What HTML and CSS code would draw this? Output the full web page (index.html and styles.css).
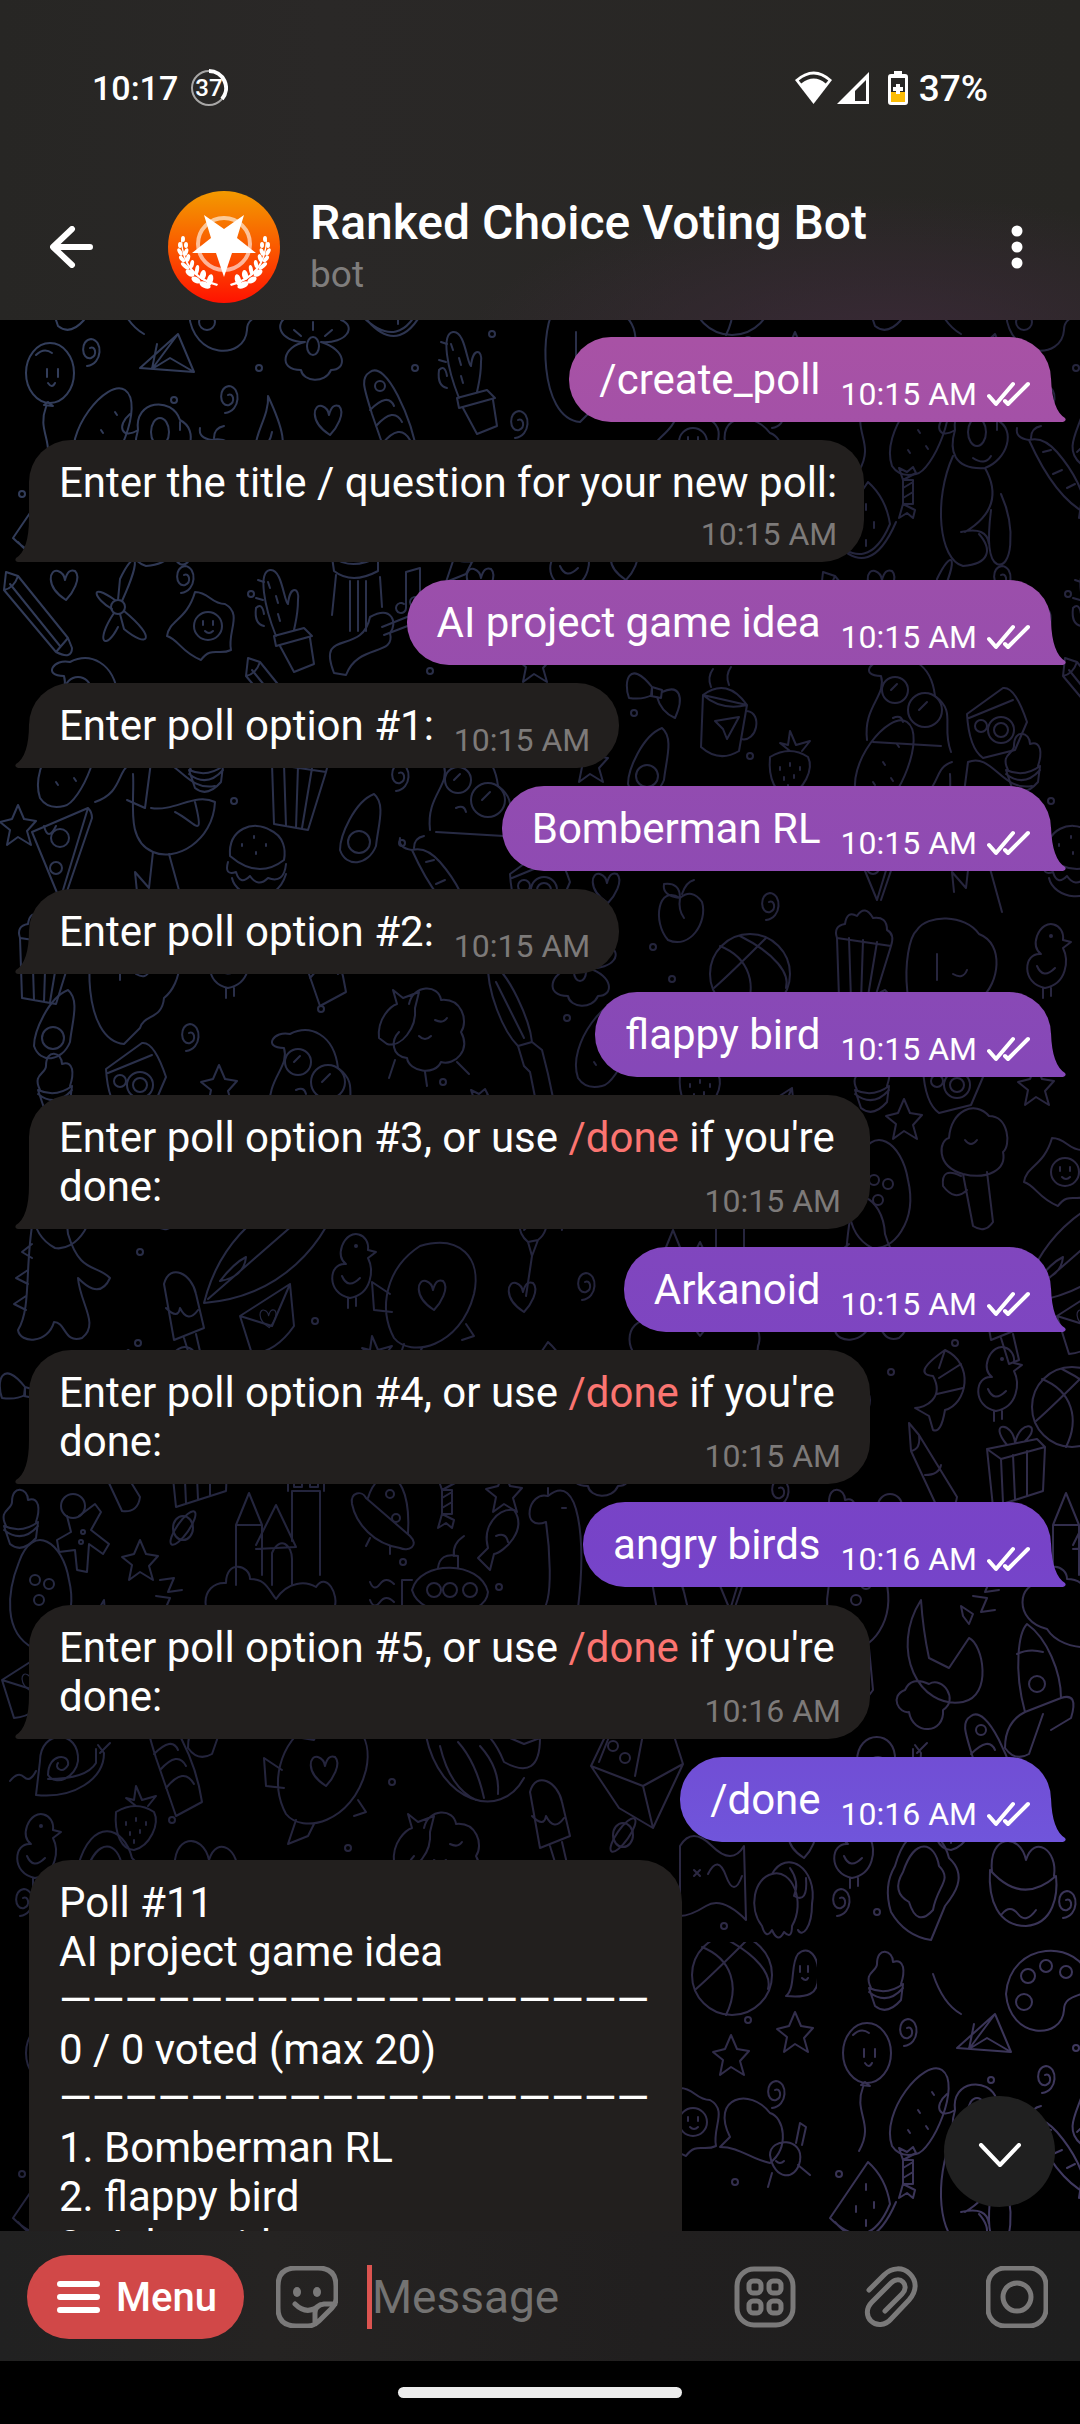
FILE: index.html
```html
<!DOCTYPE html>
<html lang="en">
<head>
<meta charset="utf-8">
<meta name="viewport" content="width=device-width, initial-scale=1">
<title>Ranked Choice Voting Bot</title>
<link rel="stylesheet" href="styles.css">
</head>
<body>
<svg class="sprite" aria-hidden="true">
  <symbol id="ticks" viewBox="0 0 44 26"><path d="M2 15l7 8L26 3M18 20l3 3L41 3" fill="none" stroke="#fff" stroke-width="4" stroke-linecap="round" stroke-linejoin="round"/></symbol>
</svg>

<header class="top">
  <div class="status">
    <span class="clock">10:17</span>
    <svg class="ring" viewBox="0 0 38 38" aria-hidden="true">
      <circle cx="19" cy="19" r="17" fill="none" stroke="#a8a7a6" stroke-width="2"/>
      <path d="M19 2a17 17 0 0 1 13 28" fill="none" stroke="#fff" stroke-width="4"/>
      <text x="19" y="27" text-anchor="middle" class="ring-text">37</text>
    </svg>
    <span class="spacer"></span>
    <svg class="signals" viewBox="0 0 76 36" aria-hidden="true">
      <path d="M1 10Q20-7 38 10L19.500 34Z" fill="#fff"/>
      <path d="M6 12Q20 1 33 12" fill="none" stroke="#272624" stroke-width="4"/>
      <path d="M75 2V34H43Z" fill="#fff"/>
      <path d="M72 10V31H61V21Z" fill="#272624"/>
    </svg>
    <svg class="battery" viewBox="0 0 20 34" aria-hidden="true">
      <path d="M6 0h8v3h3a3 3 0 0 1 3 3v25a3 3 0 0 1-3 3H3a3 3 0 0 1-3-3V6a3 3 0 0 1 3-3h3z" fill="#fff"/>
      <path d="M3 7h14v14H3z" fill="#272624"/><path d="M3 21h14v10H3z" fill="#fbbc05"/>
      <path d="M10 13v10M5 18h10" stroke="#fff" stroke-width="4"/>
    </svg>
    <span class="percent">37%</span>
  </div>
  <div class="title-row">
    <button class="icon-button back" aria-label="Back">
      <svg viewBox="0 0 44 42"><path d="M22 3L3 21l19 18M4 21h36" fill="none" stroke="#fff" stroke-width="6" stroke-linecap="round" stroke-linejoin="round"/></svg>
    </button>
    <svg class="avatar" viewBox="0 0 112 112" aria-hidden="true">
      <defs>
        <linearGradient id="sun" x1="0" y1="0" x2="0" y2="1"><stop offset="0" stop-color="#f39a00"/><stop offset=".5" stop-color="#fa5a00"/><stop offset="1" stop-color="#ff1200"/></linearGradient>
        <g id="laurel" fill="#fff">
          <ellipse cx="15" cy="48" rx="2" ry="3"/><ellipse cx="12" cy="54" rx="2" ry="3"/><ellipse cx="18" cy="54" rx="2" ry="3"/>
          <ellipse cx="12" cy="61" rx="2" ry="4" transform="rotate(-30 12 61)"/><ellipse cx="18" cy="61" rx="2" ry="4" transform="rotate(20 18 61)"/>
          <ellipse cx="14" cy="68" rx="2" ry="4" transform="rotate(-40 14 68)"/><ellipse cx="20" cy="67" rx="2" ry="4" transform="rotate(15 20 67)"/>
          <ellipse cx="17" cy="75" rx="2" ry="5" transform="rotate(-50 17 75)"/><ellipse cx="24" cy="73" rx="2" ry="4" transform="rotate(10 24 73)"/>
          <ellipse cx="22" cy="82" rx="3" ry="5" transform="rotate(-55 22 82)"/><ellipse cx="29" cy="79" rx="2" ry="5" transform="rotate(10 29 79)"/>
          <ellipse cx="28" cy="89" rx="3" ry="5" transform="rotate(-60 28 89)"/><ellipse cx="35" cy="84" rx="3" ry="5" transform="rotate(10 35 84)"/>
          <ellipse cx="37" cy="94" rx="3" ry="6" transform="rotate(-65 37 94)"/><ellipse cx="42" cy="89" rx="3" ry="6" transform="rotate(15 42 89)"/>
          <path d="M14 49Q16 84 50 93l-1 2Q14 86 13 49z"/>
        </g>
      </defs>
      <circle cx="56" cy="56" r="56" fill="url(#sun)"/>
      <circle cx="56" cy="53" r="26" fill="none" stroke="#fff" stroke-opacity=".6" stroke-width="4"/>
      <path d="M56 86L48 62H24L43 47 36 24 56 38 76 24 69 47 88 62H64Z" fill="#fff"/>
      <use href="#laurel"/><use href="#laurel" transform="translate(112 0) scale(-1 1)"/>
    </svg>
    <div class="peer">
      <h1 class="peer-name">Ranked Choice Voting Bot</h1>
      <p class="peer-kind">bot</p>
    </div>
    <button class="icon-button more" aria-label="More options">
      <svg viewBox="0 0 44 44"><g fill="#fff"><circle cx="22" cy="6" r="5.500"/><circle cx="22" cy="22" r="5.500"/><circle cx="22" cy="38" r="5.500"/></g></svg>
    </button>
  </div>
</header>

<main class="chat">
  <svg class="wallpaper" aria-hidden="true">
    <defs>
      <linearGradient id="tint" x1="0" y1="0" x2="1" y2="1">
        <stop offset="0" stop-color="#34405e"/><stop offset=".45" stop-color="#23243c"/><stop offset=".7" stop-color="#29263f"/><stop offset="1" stop-color="#423b63"/>
      </linearGradient>
      <g id="spiral"><path d="M-4 14C12 12 12-12 0-13C-11-12-10 8 0 6C7 3 4-7-1-4"/></g>
      <g id="heart"><path d="M2 16C-20 2-14-16-6-13Q0-11 1-4Q4-16 11-13C18-6 8 10 2 16Z"/></g>
      <g id="star"><path d="M0-20L6-6 18-4 9 6 13 20 0 12-11 20-8 5-18-3-6-6Z"/></g>
      <g id="dot"><circle r="3"/></g>
      <g id="balloon"><ellipse rx="24" ry="30"/><path d="M-14-18Q-6-26 2-20M-3-4v8M8-4v8M-2 10Q2 16 5 10M-6 32l4-3 5 4zM-4 34C-14 60 8 70-8 98"/></g>
      <g id="plane"><path d="M18-28L-20 6 34 10ZM18-28L-8 7-3-18M-8 7L10-4 34 10M-16-28Q-34-38-44-68"/></g>
      <g id="flower"><path d="M-8-4C-34-4-40-24-24-30C-22-48 0-46 2-36C10-48 34-42 28-26C44-20 34-2 8-4C34 4 34 24 18 24C12 38-10 36-12 24C-36 24-30 0-8-4Z"/><ellipse rx="6" ry="9"/><path d="M0-16v-8M-12-10l-7-6M12-10l7-6"/></g>
      <g id="cactus"><path d="M-4 24C-16-6-22-40-10-42C2-44 4-10 8-8C10-28 20-24 18-12C18 2 16 8 14 18M-6 24L24 16 32 24-4 34ZM0 34l14 26 20-8-4-26M-16 14q-10-2-8-18 6-6 8 6"/><path d="M-12-30l2 6M-4-16l2 7M-2 2l2 7M-22-32l6 2M-24-14l7 2"/></g>
      <g id="pickle"><path d="M-28 36C-40 2 4-52 22-40C42-26 12 42-4 44Q-20 48-28 36Z"/><path d="M-12 20l2 3M-2 0l2 3M12-18l2 3M6 16l2 3"/></g>
      <g id="cone"><path d="M-22-46C-32-40-28-30-20-4L0 54 26 40C20 0-6-58-22-46ZM-22-8Q-4-26 2-12M-16 8Q2-12 10 4M-10 26Q8 4 18 22"/><circle cx="-12" cy="-32" r="5"/></g>
      <g id="brush"><path d="M-2 30C-24 12 4-12 2-38C16-8 24 16 8 28ZM-2 30l4 14 6-16M2 44l-6 40M-6 18q10-8 12-20"/></g>
      <g id="dog"><path d="M-20-30C-24-60 14-64 22-40C42-30 32 0 10 8C-22 10-26-10-20-30C-36-20-42-34-28-46M-22-4C-42 40-36 100-12 106C14 104 18 90 4 74M10 8C28 40 10 60-10 72M-14 72Q12 66 14 84M26 34C42 70 36 110 22 104Q10 98 16 50"/><ellipse cx="2" cy="-28" rx="9" ry="14"/><path d="M-2-2q12 8 18-2M22-38v8"/></g>
      <g id="candy"><path d="M-5-10h10v24H-5zM-5-10l-4-12 8 4 6-5 3 6zM-5 14l-4 14 8-5 6 5 2-8zM-5-2l10-6M-5 8l10-6"/></g>
      <g id="melon"><path d="M8-40L-30 16Q8 54 30 2Q26-24 8-40ZM-25 20Q10 60 36 0"/><path d="M6-18v6M14 0v6M-4 4v6M6 18v6"/></g>
      <g id="pencil"><path d="M-32-44L-20-40 30 22 18 36-34-26ZM-34-26Q-24-28-20-40M-28-32L22 30M18 36q16 8 16-4l-4-10"/></g>
      <g id="egg"><path d="M-10-34C4-34 6-22 20-22C38-12 22 6 26 24C14 30 6 20-4 34C-24 26-26 14-38 10C-36-6-18-6-10-34Z"/><circle cx="3" r="14"/><path d="M-2-5v4M8-5v4M0 5q4 4 8 0"/></g>
      <g id="fan"><circle r="7"/><path d="M-3-7C-30-26-24-8-6 2M4-6C26-54 16-58 2-28L0-7M6 4C40 32 30 42 6 22L2 7M-4 6C-24 36-12 44 0 20"/></g>
      <g id="guitar"><path d="M-30-50q20 14 46 0v14q-26 14-44 0zM-26-32l-4 40M18-30l2 30M-12-26v50M-4-26v50M4-26v50M-28 66C-46 20 0 50 8 10C30-2 36 16 28 26C34 50-4 36-16 68ZM20 20l40-16M22 28l42-16"/></g>
      <g id="note"><path d="M-6 20V-16L8-20V14M-6 20a5 5 0 1 1-2-4M8 14a5 5 0 1 1-2-4"/></g>
      <g id="mug"><path d="M-22-22L-24 30Q-6 46 14 34L22-12ZM-22-22Q2-40 22-12Q-4-6-22-22M22-6C38-4 32 26 16 22M-14-30q-4-10 2-18M4-32q-4-10 2-18M-10 4L14 0 2 22-2 12Z"/></g>
      <g id="berry"><path d="M-20-8C-22 14-14 30-2 30C14 26 24 4 18-8Q0-20-20-8ZM0-14l-10-8 8 2 2-14 6 14 14-4-8 10"/><path d="M-10 2v3M0-2v3M10 2v3M-6 12v3M4 10v3M-2 20v3"/></g>
      <g id="bow"><path d="M-5-5C-28-34-34-10-28 6Q-14 8-5 3ZM5 0C22-8 28 4 18 26Q4 20 0 5M-5-5L5-2 4 6-6 4Z"/></g>
      <g id="bird"><path d="M-20-90C-40-84-30-60-60-50M-28-52L-10-44-4-90C20-100 30-60 60-66M-4-44C20-40 40-60 60-50C58-10 20 10-2 0C-30-12-20-50-22-78M-2 0L-6 36-20 20-18 40M14 2L30 60M20-40C40-30 50-10 40-50"/></g>
      <g id="pizza"><path d="M28-44L-28-20 0 48ZM28-44q4 4 4 10L4 48"/><circle cy="-14" r="9"/><circle cx="-4" cy="16" r="6"/><path d="M-16-26q4 16 12 0"/></g>
      <g id="burger"><path d="M-26-8C-28-36-2-44 14-34C28-28 30-14 28-4Q2 16-26-8ZM-28-2q-4 14 8 10 4 14 14 4 8 12 18 2 16 6 18-14M-24 14C-20 34 20 44 30 10"/><path d="M-14-20v2M-2-28v2M10-20v2M0-12v2"/></g>
      <g id="avocado"><path d="M14-36C-6-28-20 6-20 20C-14 38 8 36 16 16C18-4 26-26 14-36Z"/><circle cx="-1" cy="12" r="11"/></g>
      <g id="carrot"><path d="M-28-32Q-14-36 0-20Q26 10 30 42Q-2 26-28-32ZM-14-20l8-2M-4 2l9-4M10 16l8-4M-28-32q-14-2-12-12M-26-34q0-10 10-12"/></g>
      <g id="peach"><path d="M-2-12C-24-26-30 12-14 30C8 40 26 12 20-8Q10-22-2-12ZM-2-12Q-4 0 2 8M-2-12Q-20-14-18-26Q-2-28-2-12M0-16q4-12 12-14"/></g>
      <g id="ball"><circle r="40"/><path d="M-30-28C0-16 8 12-6 40M-10-38C26-20 40 0 36 14M16-36Q-20 0-36 14"/></g>
      <g id="popcorn"><path d="M-26-18L-24 42 10 48 28-10ZM-14-18l2 62M0-16l-2 62M14-14L4 46M-26-18q-4-12 8-14 2-14 12-8 8-12 16 2 14-2 14 12 8 4 4 16"/></g>
      <g id="tree"><path d="M-10 60C-52 56-50-40-34-54C-24-70 14-70 28-50C54-40 48 0 30 14C28 36 10 30 6 44ZM-14-30v26M2-10q10 6 14-4"/></g>
      <g id="sheep"><path d="M-16-24C-12-44 14-44 16-28C36-30 44-8 36 4C46 22 30 38 16 34C10 48-16 44-18 30C-34 28-34 12-26 4M-46 10C-48-10-34-22-28-24L-32-38-22-30-6-36-10-20C-8 0-24 20-38 16ZM-30 32L-36 50M0 44l2 14M32 34l12 12M-6 8q6 6 12 0M10-8q8 4 12-2"/></g>
      <g id="person"><path d="M-40 38C-44 4-20-6-26-26C-48-26-36-44-20-40C0-50 24-40 28-6C50 10 34 24 44 50M-34 40L34 44"/><circle cx="-12" cy="-12" r="13"/><circle cx="18" cy="8" r="17"/><path d="M-16-12l6-6M12 8l8-8M-14 16q8-4 10 4"/></g>
      <g id="camera"><path d="M-30-8L6-34Q18-36 30 0L18 28-14 36Q-28 26-30-8ZM-28-4L16-22"/><circle cx="4" cy="8" r="13"/><circle cx="4" cy="8" r="7"/><circle cx="-16" cy="4" r="6"/></g>
      <g id="fork"><path d="M-32-92C-10-80 10-30 12-10L22-2 28 22 36 60M-32-92C-34-60-16-20-2-6L12-10M-2-6l6 20 6 6 8 40M-24-70L4-14"/></g>
      <g id="broccoli"><path d="M-12 18C-40 10-36-16-26-18C-24-46 0-56 14-40C34-40 36-10 28-4C32 14 12 24-12 18ZM-12 18L-2 70Q10 78 18 66L12 16M-14 20Q-34 10-32 30Q-20 46-8 34M-10-16q6 8 12 0"/></g>
      <g id="surf"><path d="M-64 56C-50 0-10-50 76-66C60 0 10 50-64 56ZM-60 52L64-56M-48 34q14-18 26-24Q-24 30-48 34"/></g>
      <g id="duck"><path d="M-10-26C-2-46 18-38 16-22L24-20 16-14C22-2 20 22-2 26C-26 22-24-10-6-8Q-14-14-10-26ZM-10 4Q-4 18 8 6M-4 26v10M4 26v8"/><circle cx="4" cy="-26" r="1"/></g>
      <g id="envelope"><path d="M-28-2L22-34 26 8Q8 34-16 36ZM-28-2L4 8 22-34"/><use href="#heart" transform="scale(.6)"/></g>
      <g id="pop"><path d="M-18-30C-12-52 10-40 14-20L22 14-8 26ZM2 24l8 26 10-4-6-26M-16-6q12 12 14 0 8 16 18 2"/></g>
      <g id="dino"><path d="M-26-80C-30-110 6-100 8-60C20-20 36-30 50-16C40 6 24-10 18-16C20 10 40 30 22 44C4 50 6 28-6 28C-12 50-40 50-42 36C-28 14-36-30-26-80ZM-28-50l-10 8 10 6M-32-24l-12 8 12 6M-34 2l-12 8 12 6"/></g>
      <g id="shrimp"><path d="M10-44C40-30 32 10 10 16Q6 40-2 36L-6 22-20 14C-10 14 10 4-2-18Q-24-20 10-44ZM10-44L4-26M26-30L4-16M28-6L2 0"/></g>
      <g id="crayon"><path d="M-24-44L-14-32 24 30Q22 46 6 44L-22-16ZM-22-16Q-12-18-14-32M-8 8Q6 8 8-2"/></g>
      <g id="gift"><path d="M-30-18L20-28 28-20 26 24-24 40ZM-30-18L-16-8 28-20M-16-8l2 44M-4-12l2 44M10-16v44M-10-22C-30-46-4-46-2-24C4-50 26-42 8-26"/></g>
      <g id="castle"><path d="M-40 40V-20H-14V30M-40-20L-27-52-14-20M-20 0L0-40 20 2-20 4M16-4V-54H44V30M12-54V-66H18V-58H26V-66H34V-58H42V-66H48V-54M-4 40V8C4-10 16 0 16 14V40M-46 84C-80 76-76 36-50 38C-50 14-26 20-26 34C-10 34-8 44 0 54C12 36 30 36 40 42C50 26 64 50 58 64C58 86 38 88 34 88C22 106-30 110-46 84Z"/></g>
      <g id="ufo"><path d="M-30-14C-32-26-20-28-16-20L28 18C38 28 26 34 18 30C-8 26-26 6-30-14ZM-14-20C-4-54 30-52 26 16M-12 20l-4 8M8 28v8"/><circle cx="8" cy="-24" r="4"/><circle cx="14" r="4"/></g>
      <g id="fish"><path d="M14-24C28-4 4 18-6 20L-10 36-22 24-12 14C-18-8-2-26 14-24ZM-4 2q10-4 12 6"/></g>
      <g id="nessie"><path d="M-26 50C-10 44-18-26-20-40C-46-30-38-72-18-66C14-92 20-20 12 46M-46 50C-40 74 34 72 24 46M-60 100Q-40 60-10 62Q20 60 50 110M-18-74v6M-4-54h4"/></g>
      <g id="planet"><ellipse rx="10" ry="12"/><ellipse rx="20" ry="6" transform="rotate(-55)"/></g>
      <g id="ginger"><circle cx="-10" cy="-26" r="12"/><path d="M-4-16L12-28 18-20 8-2 26 12 20 22 6 12 4 40-6 38-8 18-24 20-26 8-12 0-16-16"/><circle r="2"/><circle cx="-2" cy="10" r="2"/></g>
      <g id="cupcake"><path d="M-16 8L-10 26Q2 36 16 20L18 4Q2 16-16 8ZM-14 8C-22-8-8-8-8-16C-8-34 8-30 8-18C20-22 20-8 16 4M-16 12Q2 26 18 8"/></g>
      <g id="pin"><path d="M-24-30C-10-70 20-50 26-12C36 30 10 60-10 56C-40 40-36 0-24-30Z"/><circle cx="-8" cy="-12" r="5"/><circle cx="6" cy="-8" r="5"/><circle cx="-4" cy="8" r="5"/></g>
      <g id="ghost"><path d="M-16 22C-6 14-12-10-4-20C6-30 18-18 16 4C16 20 6 24-16 22ZM-2-8v6M6-8v6M0 4q4 4 6 0"/></g>
      <g id="sub"><path d="M-38 0C-30-30 30-30 38 2C36 30-30 30-38 0ZM-12-22Q-10-38 8-34V-22M4-34Q2-46 14-54M-38-10h-10v26h10M-56-6q-8-8-14 0t-10-2M-56 12q-8-8-14 0t-10-2"/><circle cx="-16" r="7"/><circle r="7"/><circle cx="20" r="7"/></g>
      <g id="zzz"><path d="M-14 14l-2-10 12 8-4 10zM-4-6l14 2-6 14 14-2M0-22l14-2-6 14 14-2"/></g>
      <g id="moon"><path d="M-18-60C-50-10-20 50 24 42C54 36 44-16 30-22L10 8-10-2Q-16-30-18-60ZM-34 30C-50 36-40 54-30 52C-26 76 6 74 4 50C20 40 4 16-10 24Q-28 16-34 30Z"/></g>
      <g id="rocket"><path d="M-14 30C-26-14-20-50-12-58C8-44 22-10 22 16ZM-22-28Q-10-34 4-30M-14 30Q-34 40-34 66Q-24 80-10 72L4 32M22 16Q40 10 32 36L12 48"/><circle cx="-2" cy="2" r="8"/></g>
      <g id="snail"><path d="M-24-8C-24-40 16-40 14-8C12 8-8 18-16 6C-16-16 6-16 4-4C-2 6-10-2-6-6M-24-8L-28 26C10 30 40 10 40-16L34-24M36-16l10-10M32-20V-6C26 4 10 10-16 10M-54 12q8-10 14-4t12-6"/></g>
      <g id="puffer"><path d="M-10-52C30-64 52-40 44-4C30 50-20 60-36 40C-52 10-44-30-10-52ZM-40-4L-58-16-56 12-38 14M-26 46L-34 70-14 62-8 50M36 26L44 38 32 42"/><use href="#heart" x="2" y="-4"/></g>
      <g id="boat"><path d="M-54-26Q0-60 24 0Q60 20 60-24L44-18 30-24M-54-26C-40 40 20 60 44 16M-40-16Q-30 26-4 38M-22-20Q-4 0 4 36M0-16Q20 6 18 32"/></g>
      <g id="box"><path d="M-42-4L-20-50 34-56 50-6 20 58-14 38ZM-42-4L10 16 50-6M10 16L20 58M-34-8L-22-38 10-36 2 6"/><circle cx="-20" cy="-24" r="5"/><circle cx="-8" cy="-12" r="5"/></g>
      <g id="map"><path d="M-32-30Q-20-50 0-30T32-30L34 44Q10 20-6 30T-32 40ZM-18-6l6 6M-12-6l-6 6M-4-2q10-20 18 2t16 0"/></g>
      <g id="toast"><path d="M-30-20C-16-70 16-60 24-28C44-10 28 10 20 20L6 54Q-20 50-34 26Q-42 0-30-20ZM-22-14C-10-50 10-44 14-20C28-6 12 0 8 24Q-8 42-16 16Q-34 6-22-14Z"/></g>
      <g id="bowl"><path d="M-32-10C-34 20-24 46 4 46C32 44 36 14 34-4Q0 26-32-10ZM-30-8C-34-46-2-48 4-20C12-46 36-30 32-4M-20 34q8-10 16 0t18-4"/></g>
      <g id="elephant"><path d="M-20 28C-34 10-28-20-10-24C4-50 36-30 30 6C30 30 20 40 16 32M-20 28q4 14 10 4 6 14 12 2 8 8 8-6C24 4 10-30-10-24M8-30q10 14 4 28 14 8 12-18"/></g>
      <g id="palette"><path d="M-44 4C-40-50 30-52 40-10C44 10 14 0 14 20C12 50-40 50-44 4Z"/><circle cx="-22" cy="-14" r="7"/><circle cx="-4" cy="-24" r="6"/><circle cx="16" cy="-18" r="6"/><circle cx="-26" cy="12" r="8"/></g>
      <g id="crab"><path d="M-40-10C-60-50-20-60 0-34C14-30 20 0 0 16C-20 12-30 0-50 0ZM0 8C0-10 34-10 30 14C26 34 4 34 0 8ZM2 26l-4 14M28 18l12 10M26-4l4-20 6 4-4 18M6 14q4 4 8 0"/></g>

      <pattern id="doodles" patternUnits="userSpaceOnUse" x="0" y="-58" width="817" height="1680">
        <g fill="none" stroke="#fff" stroke-width="2" stroke-linecap="round" stroke-linejoin="round">
          <use href="#ball" x="732" y="33"/><use href="#ghost" x="802" y="32"/>
          <use href="#palette" x="233" y="48"/><use href="#cupcake" x="68" y="38"/><use href="#melon" x="392" y="38"/>
          <use href="#balloon" x="50" y="111"/><use href="#spiral" x="91" y="90"/><use href="#plane" x="160" y="100"/>
          <use href="#flower" x="313" y="84"/><use href="#cactus" x="463" y="112"/><use href="#star" x="795" y="90"/><use href="#star" x="731" y="113"/>
          <use href="#pickle" x="103" y="168"/><use href="#spiral" x="229" y="137"/><use href="#brush" x="266" y="172"/>
          <use href="#heart" x="328" y="157"/><use href="#cone" x="392" y="156"/><use href="#spiral" x="519" y="162"/>
          <use href="#tree" x="590" y="100"/><use href="#spiral" x="776" y="152"/><use href="#crab" x="770" y="205"/>
          <use href="#dog" x="158" y="198"/><use href="#candy" x="91" y="228"/><use href="#melon" x="43" y="260"/>
          <use href="#gift" x="300" y="250"/><use href="#duck" x="570" y="300"/><use href="#carrot" x="240" y="210"/>
          <use href="#puffer" x="480" y="250"/><use href="#egg" x="690" y="180"/><use href="#burger" x="640" y="240"/>
          <use href="#heart" x="64" y="322"/><use href="#spiral" x="185" y="317"/><use href="#pencil" x="38" y="354"/>
          <use href="#fan" x="118" y="345"/><use href="#egg" x="205" y="364"/><use href="#cactus" x="280" y="350"/>
          <use href="#guitar" x="362" y="345"/><use href="#note" x="412" y="326"/><use href="#heart" x="624" y="302"/><use href="#heart" x="480" y="320"/>
          <use href="#star" x="534" y="400"/><use href="#bow" x="657" y="430"/><use href="#mug" x="725" y="455"/>
          <use href="#person" x="90" y="440"/><use href="#camera" x="180" y="460"/><use href="#pencil" x="280" y="440"/>
          <use href="#berry" x="790" y="503"/><use href="#spiral" x="400" y="515"/><use href="#avocado" x="648" y="502"/>
          <use href="#cupcake" x="205" y="500"/><use href="#pickle" x="68" y="500"/><use href="#popcorn" x="298" y="520"/>
          <use href="#bird" x="155" y="590"/><use href="#star" x="18" y="563"/><use href="#pizza" x="60" y="590"/>
          <use href="#burger" x="256" y="602"/><use href="#avocado" x="360" y="568"/><use href="#carrot" x="440" y="620"/>
          <use href="#person" x="470" y="530"/><use href="#star" x="590" y="500"/><use href="#cone" x="320" y="690"/><use href="#heart" x="606" y="625"/>
          <use href="#peach" x="682" y="648"/><use href="#spiral" x="770" y="644"/><use href="#camera" x="540" y="620"/>
          <use href="#ball" x="750" y="712"/><use href="#popcorn" x="46" y="694"/><use href="#tree" x="134" y="722"/>
          <use href="#duck" x="230" y="700"/><use href="#flower" x="580" y="710"/><use href="#sheep" x="425" y="766"/>
          <use href="#person" x="310" y="812"/><use href="#camera" x="136" y="815"/><use href="#star" x="219" y="823"/><use href="#spiral" x="190" y="775"/>
          <use href="#fork" x="520" y="790"/><use href="#pickle" x="606" y="780"/><use href="#cupcake" x="54" y="820"/><use href="#avocado" x="54" y="764"/>
          <use href="#berry" x="700" y="820"/><use href="#candy" x="480" y="850"/><use href="#star" x="87" y="857"/>
          <use href="#broccoli" x="158" y="894"/><use href="#pin" x="65" y="930"/><use href="#egg" x="245" y="910"/>
          <use href="#fan" x="360" y="900"/><use href="#sheep" x="560" y="910"/><use href="#gift" x="690" y="910"/><use href="#envelope" x="770" y="860"/>
          <use href="#surf" x="268" y="985"/><use href="#duck" x="352" y="1010"/><use href="#puffer" x="430" y="1036"/>
          <use href="#heart" x="522" y="1034"/><use href="#spiral" x="586" y="1024"/><use href="#brush" x="530" y="950"/>
          <use href="#dino" x="60" y="1032"/><use href="#pop" x="182" y="1052"/><use href="#envelope" x="268" y="1056"/>
          <use href="#castle" x="700" y="1020"/><use href="#melon" x="540" y="1120"/><use href="#berry" x="372" y="1108"/>
          <use href="#shrimp" x="118" y="1132"/><use href="#duck" x="181" y="1123"/><use href="#ball" x="255" y="1145"/>
          <use href="#crayon" x="116" y="1205"/><use href="#gift" x="200" y="1205"/><use href="#bow" x="30" y="1130"/>
          <use href="#fish" x="430" y="1150"/><use href="#mug" x="680" y="1170"/><use href="#flower" x="600" y="1200"/><use href="#candy" x="770" y="1170"/>
          <use href="#castle" x="276" y="1283"/><use href="#ufo" x="382" y="1256"/><use href="#candy" x="447" y="1238"/>
          <use href="#star" x="504" y="1230"/><use href="#fish" x="500" y="1272"/><use href="#nessie" x="566" y="1300"/>
          <use href="#planet" x="183" y="1266"/><use href="#ginger" x="83" y="1270"/><use href="#cupcake" x="20" y="1256"/><use href="#star" x="140" y="1298"/>
          <use href="#pin" x="43" y="1330"/><use href="#sub" x="450" y="1328"/><use href="#zzz" x="160" y="1340"/>
          <use href="#spiral" x="780" y="1230"/><use href="#pizza" x="730" y="1300"/><use href="#pop" x="670" y="1350"/>
          <use href="#moon" x="122" y="1398"/><use href="#rocket" x="222" y="1420"/><use href="#envelope" x="30" y="1420"/>
          <use href="#guitar" x="330" y="1410"/><use href="#berry" x="450" y="1420"/><use href="#bowl" x="580" y="1430"/><use href="#toast" x="760" y="1420"/>
          <use href="#snail" x="64" y="1507"/><use href="#cone" x="176" y="1500"/><use href="#puffer" x="322" y="1512"/>
          <use href="#boat" x="480" y="1500"/><use href="#box" x="633" y="1508"/><use href="#berry" x="136" y="1558"/>
          <use href="#pop" x="548" y="1560"/><use href="#planet" x="623" y="1573"/><use href="#duck" x="37" y="1590"/>
          <use href="#sheep" x="440" y="1590"/><use href="#bowl" x="205" y="1618"/><use href="#map" x="712" y="1614"/>
          <use href="#toast" x="108" y="1624"/><use href="#elephant" x="782" y="1636"/><use href="#spiral" x="24" y="1640"/><use href="#spiral" x="250" y="1642"/><use href="#heart" x="802" y="1580"/>
          <g>
            <use href="#dot" x="259" y="106"/><use href="#dot" x="174" y="138"/><use href="#dot" x="415" y="106"/><use href="#dot" x="492" y="72"/><use href="#dot" x="22" y="232"/><use href="#dot" x="251" y="332"/>
            <use href="#dot" x="430" y="409"/><use href="#dot" x="634" y="451"/><use href="#dot" x="750" y="494"/><use href="#dot" x="234" y="539"/><use href="#dot" x="402" y="581"/><use href="#dot" x="653" y="685"/>
            <use href="#dot" x="321" y="747"/><use href="#dot" x="567" y="756"/><use href="#dot" x="443" y="820"/><use href="#dot" x="672" y="717"/><use href="#dot" x="140" y="990"/><use href="#dot" x="315" y="1059"/>
            <use href="#dot" x="138" y="1081"/><use href="#dot" x="74" y="1110"/><use href="#dot" x="403" y="1300"/><use href="#dot" x="499" y="1325"/><use href="#dot" x="392" y="1520"/><use href="#dot" x="172" y="1558"/>
            <use href="#dot" x="348" y="1586"/><use href="#dot" x="724" y="1664"/><use href="#dot" x="748" y="78"/><use href="#dot" x="735" y="240"/><use href="#dot" x="60" y="1650"/>
          </g>
        </g>
      </pattern>
      <mask id="ink"><rect width="100%" height="100%" fill="url(#doodles)"/></mask>
    </defs>
    <rect width="100%" height="100%" fill="url(#tint)" mask="url(#ink)"/>
  </svg>

  <ol class="messages">
    <li class="message out"><p>/create_poll</p><span class="meta"><time>10:15 AM</time><svg class="ticks"><use href="#ticks"/></svg></span></li>
    <li class="message in stacked"><p>Enter the title / question for your new poll:</p><span class="meta"><time>10:15 AM</time></span></li>
    <li class="message out"><p>AI project game idea</p><span class="meta"><time>10:15 AM</time><svg class="ticks"><use href="#ticks"/></svg></span></li>
    <li class="message in"><p>Enter poll option #1:</p><span class="meta"><time>10:15 AM</time></span></li>
    <li class="message out"><p>Bomberman RL</p><span class="meta"><time>10:15 AM</time><svg class="ticks"><use href="#ticks"/></svg></span></li>
    <li class="message in"><p>Enter poll option #2:</p><span class="meta"><time>10:15 AM</time></span></li>
    <li class="message out"><p>flappy bird</p><span class="meta"><time>10:15 AM</time><svg class="ticks"><use href="#ticks"/></svg></span></li>
    <li class="message in wrapped"><p>Enter poll option #3, or use <a href="#done">/done</a> if you're done:</p><span class="meta"><time>10:15 AM</time></span></li>
    <li class="message out"><p>Arkanoid</p><span class="meta"><time>10:15 AM</time><svg class="ticks"><use href="#ticks"/></svg></span></li>
    <li class="message in wrapped"><p>Enter poll option #4, or use <a href="#done">/done</a> if you're done:</p><span class="meta"><time>10:15 AM</time></span></li>
    <li class="message out"><p>angry birds</p><span class="meta"><time>10:16 AM</time><svg class="ticks"><use href="#ticks"/></svg></span></li>
    <li class="message in wrapped"><p>Enter poll option #5, or use <a href="#done">/done</a> if you're done:</p><span class="meta"><time>10:16 AM</time></span></li>
    <li class="message out" id="done"><p>/done</p><span class="meta"><time>10:16 AM</time><svg class="ticks"><use href="#ticks"/></svg></span></li>
    <li class="message in poll"><p>Poll #11<br>AI project game idea<br>——————————————————<br>0 / 0 voted (max 20)<br>——————————————————<br>1. Bomberman RL<br>2. flappy bird<br>3. Arkanoid</p></li>
  </ol>
  <button class="to-bottom" aria-label="Scroll to latest message">
    <svg viewBox="0 0 44 24"><path d="M3 2l19 20L41 2" fill="none" stroke="#fff" stroke-width="4" stroke-linecap="round" stroke-linejoin="round"/></svg>
  </button>
</main>

<form class="composer">
  <button class="menu" type="button">
    <svg viewBox="0 0 43 34" aria-hidden="true"><path d="M3 4h37M3 17h37M3 30h37" stroke="#fff" stroke-width="6" stroke-linecap="round"/></svg>
    Menu
  </button>
  <button class="icon-button tool" type="button" aria-label="Stickers">
    <svg viewBox="0 0 62 62"><path d="M20 2H42Q60 2 60 20V33Q60 38 56 42L43 55Q38 60 32 60H20Q2 60 2 42V20Q2 2 20 2ZM59 38H48Q39 39 39 47V58M19 38Q31 50 44 39"/><g class="solid"><ellipse cx="21" cy="26" rx="4" ry="5"/><ellipse cx="41" cy="26" rx="4" ry="5"/></g></svg>
  </button>
  <input class="field" type="text" placeholder="Message" aria-label="Message">
  <button class="icon-button tool" type="button" aria-label="Bot commands">
    <svg viewBox="0 0 62 62"><rect x="3" y="3" width="56" height="56" rx="17"/><rect x="15" y="15" width="12" height="12" rx="4"/><rect x="35" y="15" width="12" height="12" rx="4"/><rect x="15" y="35" width="12" height="12" rx="4"/><rect x="35" y="35" width="12" height="12" rx="4"/></svg>
  </button>
  <button class="icon-button tool" type="button" aria-label="Attach">
    <svg viewBox="0 0 62 62"><path d="M9 24L24 9C32 1 43 1 50 8C57 15 57 25 49 34L31 53C25 60 16 60 11 55C6 50 6 42 12 36L31 17C35 13 40 13 43 16C46 19 46 24 42 28L25 45"/></svg>
  </button>
  <button class="icon-button tool" type="button" aria-label="Camera">
    <svg viewBox="0 0 62 62"><rect x="2" y="2" width="58" height="58" rx="17"/><circle cx="31" cy="31" r="14"/></svg>
  </button>
</form>
<footer class="gesture"><span class="pill"></span></footer>
</body>
</html>
```
FILE: styles.css
```css
* { box-sizing: border-box; }

body {
  margin: 0;
  height: 100vh;
  display: flex;
  flex-direction: column;
  background: #000;
  color: #fff;
  font-family: Roboto, "Liberation Sans", sans-serif;
  font-size: 42px;
  line-height: 49px;
}

h1, p, ol { margin: 0; padding: 0; font-weight: 400; }
svg { display: block; }
button { border: 0; padding: 0; background: none; color: inherit; font: inherit; }
.sprite { position: absolute; width: 0; height: 0; }
.icon-button { flex: none; width: 44px; }

/* Header */
.top {
  flex: none;
  padding: 68px 41px 17px 50px;
  background: radial-gradient(ellipse 420px 150px at 82% 108%, #392936, transparent), linear-gradient(90deg, #272624, #2a2827 30%, #272623);
}
.status {
  display: flex;
  align-items: center;
  height: 40px;
  margin: 0 51px 83px 42px;
  font-size: 37px;
  font-weight: 500;
}
.clock { font-size: 34px; }
.ring { width: 38px; height: 38px; margin-left: 12px; }
.ring-text { fill: #fff; font-size: 24px; font-weight: 500; }
.spacer { flex: 1; }
.signals { width: 76px; height: 36px; margin-right: 18px; }
.battery { width: 20px; height: 34px; margin-right: 11px; }
.title-row { display: flex; align-items: center; height: 112px; }
.avatar { flex: none; width: 112px; height: 112px; margin-left: 74px; }
.peer { flex: 1; min-width: 0; margin-left: 30px; padding-bottom: 4px; }
.peer-name { margin-bottom: 3px; font-size: 48px; line-height: 55px; font-weight: 500; }
.peer-kind { font-size: 37px; line-height: 43px; color: #7f7d7c; }

/* Conversation */
.chat { position: relative; flex: 1 1 0; min-height: 0; overflow: hidden; }
.wallpaper { position: absolute; inset: 0; width: 100%; height: 100%; }
.messages {
  position: relative;
  display: flex;
  flex-direction: column;
  gap: 18px;
  padding: 17px 29px;
  list-style: none;
}
.message {
  position: relative;
  display: flex;
  align-items: flex-end;
  gap: 20px;
  max-width: 841px;
  padding: 18px 29px 9px 30px;
  border-radius: 42px;
}
.message p { margin-bottom: 9px; }
.message a { color: #fb7571; text-decoration: none; }
.message::after { content: ""; position: absolute; bottom: 0; width: 58px; height: 44px; }

.in { align-self: flex-start; background: #221f1e; border-bottom-left-radius: 0; }
.in::after {
  left: -14px;
  background: #221f1e;
  clip-path: path("M14 0Q14 32 1 40Q-1 43 3 44H58V0Z");
}
.out { align-self: flex-end; padding-right: 20px; border-bottom-right-radius: 0; }
.out::after {
  right: -15px;
  clip-path: path("M43 0Q44 32 57 40Q59 43 55 44H0V0Z");
}
.out, .out::after {
  background: linear-gradient(#a852a5 14%, #994eac 26%, #8648b8 44%, #7743c8 64%, #7249d0 70%, #7055db 76%) fixed;
}
.message p, .meta { position: relative; z-index: 1; }

.meta { display: flex; align-items: center; gap: 10px; font-size: 32px; line-height: 38px; white-space: nowrap; }
.in .meta { color: #7d7a79; }
.ticks { width: 44px; height: 26px; }

.stacked { flex-direction: column; gap: 8px; padding-right: 27px; }
.stacked p { margin-bottom: 0; }
.wrapped { display: grid; align-items: end; }
.wrapped > * { grid-area: 1 / 1; }
.wrapped .meta { justify-self: end; }
.poll { padding-right: 33px; }

.to-bottom {
  position: absolute;
  right: 25px;
  bottom: 24px;
  display: grid;
  place-items: center;
  width: 111px;
  height: 111px;
  padding-top: 6px;
  border-radius: 50%;
  background: #202020;
}
.to-bottom svg { width: 44px; height: 24px; }

/* Composer */
.composer {
  flex: none;
  display: flex;
  align-items: center;
  height: 130px;
  padding: 2px 32px 0 27px;
  background: linear-gradient(90deg, #212121, #252322 25%, #211f1f 60%, #1e1e1e);
}
.menu {
  flex: none;
  display: flex;
  align-items: center;
  gap: 16px;
  height: 84px;
  margin-right: 32px;
  padding: 0 27px 0 30px;
  border-radius: 42px;
  background: #d14848;
  font-size: 40px;
  font-weight: 500;
}
.menu svg { width: 43px; height: 34px; }
.tool { width: 62px; }
.tool svg { fill: none; stroke: #7a7979; stroke-width: 5; stroke-linecap: round; stroke-linejoin: round; }
.tool .solid { fill: #7a7979; stroke: none; }
.field {
  flex: 1;
  min-width: 0;
  height: 64px;
  margin-left: 29px;
  padding: 0;
  border: 0;
  border-left: 5px solid #dc5450;
  background: none;
  color: #fff;
  font: inherit;
  font-size: 46px;
}
.field::placeholder { color: #747372; opacity: 1; }
.tool + .tool { margin-left: 64px; }

.gesture { flex: none; display: flex; justify-content: center; height: 63px; padding-top: 26px; }
.pill { width: 284px; height: 11px; border-radius: 6px; background: #ececec; }
```
